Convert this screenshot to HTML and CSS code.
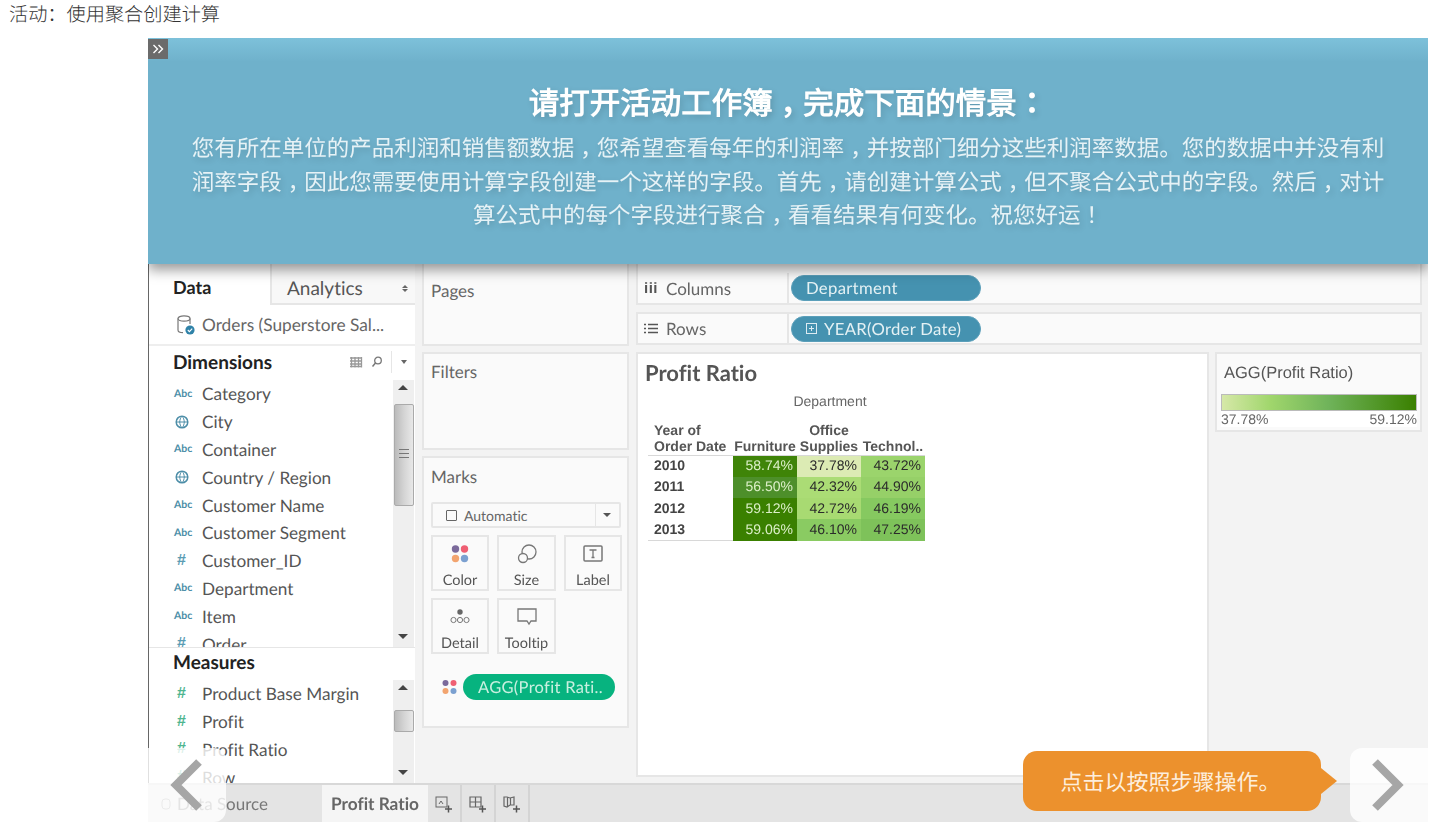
FILE: index.html
```html
<!DOCTYPE html>
<html lang="zh-CN">
<head>
    <meta charset="UTF-8">
    <meta name="viewport" content="width=device-width, initial-scale=1.0">
    <title>活动：使用聚合创建计算</title>
    <link rel="stylesheet" href="styles.css">
</head>
<body>
    <div class="page-title">活动：使用聚合创建计算</div>

    <div class="stage">
        <!-- Tableau workspace picture -->
        <div class="workspace">
            <div class="sidebar">
                <div class="side-tabs">
                    <div class="side-tab active">Data</div>
                    <div class="side-tab">Analytics<span class="updown"></span></div>
                </div>
                <div class="source-row">
                    <svg class="db-icon" width="20" height="22" viewBox="0 0 20 22">
                        <ellipse cx="8" cy="4.5" rx="6" ry="2.6" fill="none" stroke="#777" stroke-width="1.2"/>
                        <path d="M2 4.5V16c0 1.6 2.4 2.6 5 2.6M14 4.5V10" fill="none" stroke="#777" stroke-width="1.2"/>
                        <circle cx="14" cy="16" r="4.6" fill="#2f82a8"/>
                        <path d="M11.8 16l1.6 1.6 2.8-3" fill="none" stroke="#fff" stroke-width="1.1"/>
                    </svg>
                    Orders (Superstore Sal...
                </div>

                <div class="dimensions">
                    <div class="section-head">
                        Dimensions
                        <div class="head-tools">
                            <svg width="14" height="12" viewBox="0 0 14 12"><path d="M1 2h12M1 5h12M1 8h12M1 10.500h12M2.500 1v10.500M6 1v10.500M9.500 1v10.500M12.500 1v10.500" stroke="#999" stroke-width="1.300" fill="none"/></svg>
                            <svg width="12" height="12" viewBox="0 0 12 12"><circle cx="7" cy="4.500" r="3.300" fill="none" stroke="#777" stroke-width="1.300"/><path d="M4.500 7L1.500 10.500" stroke="#777" stroke-width="1.500"/></svg>
                            <span class="head-caret"></span>
                        </div>
                    </div>
                    <div class="field-pane">
                        <ul class="field-list">
                            <li><span class="abc">Abc</span>Category</li>
                            <li>
                                <svg class="globe" width="14" height="14" viewBox="0 0 14 14"><circle cx="7" cy="7" r="5.800" fill="none" stroke="#4d8ea8" stroke-width="1.500"/><path d="M1.200 7h11.600M7 1.200c-3 3-3 8.600 0 11.600M7 1.200c3 3 3 8.600 0 11.600" fill="none" stroke="#4d8ea8"/></svg>City
                            </li>
                            <li><span class="abc">Abc</span>Container</li>
                            <li>
                                <svg class="globe" width="14" height="14" viewBox="0 0 14 14"><circle cx="7" cy="7" r="5.800" fill="none" stroke="#4d8ea8" stroke-width="1.500"/><path d="M1.200 7h11.600M7 1.200c-3 3-3 8.600 0 11.600M7 1.200c3 3 3 8.600 0 11.600" fill="none" stroke="#4d8ea8"/></svg>Country / Region
                            </li>
                            <li><span class="abc">Abc</span>Customer Name</li>
                            <li><span class="abc">Abc</span>Customer Segment</li>
                            <li><span class="hash">#</span>Customer_ID</li>
                            <li><span class="abc">Abc</span>Department</li>
                            <li><span class="abc">Abc</span>Item</li>
                            <li><span class="hash">#</span>Order</li>
                        </ul>
                        <div class="scrollbar">
                            <span class="arrow-up"></span>
                            <div class="thumb thumb-long"><span class="grip"></span></div>
                            <span class="arrow-down"></span>
                        </div>
                    </div>
                </div>

                <div class="measures">
                    <div class="section-head">Measures</div>
                    <div class="field-pane">
                        <ul class="field-list">
                            <li><span class="hash green">#</span>Product Base Margin</li>
                            <li><span class="hash green">#</span>Profit</li>
                            <li><span class="hash green">#</span>Profit Ratio</li>
                            <li><span class="hash green">#</span>Row</li>
                        </ul>
                        <div class="scrollbar">
                            <span class="arrow-up"></span>
                            <div class="thumb thumb-short"></div>
                            <span class="arrow-down"></span>
                        </div>
                    </div>
                </div>
            </div>

            <div class="cards">
                <div class="card card-pages">Pages</div>
                <div class="card card-filters">Filters</div>
                <div class="card card-marks">
                    Marks
                    <div class="mark-select">
                        <span class="mark-square"></span>
                        <span class="mark-select-text">Automatic</span>
                        <span class="mark-select-btn"></span>
                    </div>
                    <div class="mark-grid">
                        <div class="mark-btn">
                            <svg width="20" height="20" viewBox="0 0 20 20"><circle cx="5.500" cy="5" r="3.700" fill="#7b6a9b"/><circle cx="14.500" cy="5" r="3.700" fill="#ef5f73"/><circle cx="5.500" cy="14.500" r="3.700" fill="#f2a46f"/><circle cx="14.500" cy="14.500" r="3.700" fill="#7ba0d0"/></svg>
                            Color
                        </div>
                        <div class="mark-btn">
                            <svg width="20" height="20" viewBox="0 0 20 20"><circle cx="12" cy="8" r="7" fill="none" stroke="#777" stroke-width="1.300"/><circle cx="6" cy="14" r="4.500" fill="#fafafa" stroke="#777" stroke-width="1.300"/></svg>
                            Size
                        </div>
                        <div class="mark-btn">
                            <svg width="20" height="20" viewBox="0 0 20 20"><rect x="1" y="2" width="18" height="15" rx="1" fill="none" stroke="#777" stroke-width="1.500"/><path d="M6.500 6h7M10 6v7.500M8.500 13.500h3" stroke="#777" stroke-width="1.300" fill="none"/></svg>
                            Label
                        </div>
                        <div class="mark-btn">
                            <svg width="22" height="20" viewBox="0 0 22 20"><circle cx="11" cy="5" r="2.700" fill="#666"/><circle cx="4.500" cy="13" r="2.600" fill="none" stroke="#777"/><circle cx="11" cy="13" r="2.600" fill="none" stroke="#777"/><circle cx="17.500" cy="13" r="2.600" fill="none" stroke="#777"/></svg>
                            Detail
                        </div>
                        <div class="mark-btn">
                            <svg width="20" height="20" viewBox="0 0 20 20"><path d="M1 2h18v12h-5l-2 3-2-3H1z" fill="none" stroke="#777" stroke-width="1.300"/></svg>
                            Tooltip
                        </div>
                    </div>
                    <div class="mark-field">
                        <svg width="15" height="16" viewBox="0 0 15 16"><circle cx="3.500" cy="4" r="3" fill="#7b6a9b"/><circle cx="11.500" cy="4" r="3" fill="#ef5f73"/><circle cx="3.500" cy="12" r="3" fill="#f2a46f"/><circle cx="11.500" cy="12" r="3" fill="#7ba0d0"/></svg>
                        <span class="pill pill-green">AGG(Profit Rati..</span>
                    </div>
                </div>
            </div>

            <div class="main-area">
                <div class="shelf shelf-columns">
                    <div class="shelf-label"><span class="shelf-icon">iii</span>Columns</div>
                    <span class="pill pill-blue">Department</span>
                </div>
                <div class="shelf shelf-rows">
                    <div class="shelf-label">
                        <svg class="shelf-svg" width="14" height="11" viewBox="0 0 14 11"><path d="M0 1.500h2M4 1.500h10M0 5.500h2M4 5.500h10M0 9.500h2M4 9.500h10" stroke="#555" stroke-width="1.500"/></svg>
                        Rows
                    </div>
                    <span class="pill pill-blue">
                        <svg class="plus-box" width="11" height="11" viewBox="0 0 11 11"><rect x=".5" y=".5" width="10" height="10" fill="none" stroke="#dcebf2"/><path d="M3 5.500h5M5.500 3v5" stroke="#dcebf2"/></svg>
                        YEAR(Order Date)
                    </span>
                </div>
                <div class="view-row">
                    <div class="view">
                        <div class="view-title">Profit Ratio</div>
                        <div class="dept-label">Department</div>
                        <table class="crosstab">
                            <tr class="head-row">
                                <th class="year-head">Year of<br>Order Date</th>
                                <th>Furniture</th>
                                <th>Office<br>Supplies</th>
                                <th>Technol..</th>
                            </tr>
                            <tr>
                                <th class="year">2010</th>
                                <td class="light-text" style="background: #3f8408">58.74%</td>
                                <td style="background: #dcebb4">37.78%</td>
                                <td style="background: #9bd46c">43.72%</td>
                            </tr>
                            <tr>
                                <th class="year">2011</th>
                                <td class="light-text" style="background: #4d8f2a">56.50%</td>
                                <td style="background: #abdc75">42.32%</td>
                                <td style="background: #96d068">44.90%</td>
                            </tr>
                            <tr>
                                <th class="year">2012</th>
                                <td class="light-text" style="background: #3a8000">59.12%</td>
                                <td style="background: #a8da72">42.72%</td>
                                <td style="background: #86c960">46.19%</td>
                            </tr>
                            <tr>
                                <th class="year">2013</th>
                                <td class="light-text" style="background: #3a8000">59.06%</td>
                                <td style="background: #8acb62">46.10%</td>
                                <td style="background: #7ec25a">47.25%</td>
                            </tr>
                        </table>
                    </div>
                    <div class="legend-col">
                        <div class="legend">
                            <div class="legend-title">AGG(Profit Ratio)</div>
                            <div class="legend-bar"></div>
                            <div class="legend-range"><span>37.78%</span><span>59.12%</span></div>
                        </div>
                    </div>
                </div>
            </div>
        </div>

        <div class="tabbar">
            <div class="tab-source">
                <svg width="10" height="12" viewBox="0 0 10 12"><rect x="1" y="1" width="8" height="10" rx="3" fill="none" stroke="#999"/></svg>
                Data Source
            </div>
            <div class="tab-sheet">Profit Ratio</div>
            <div class="tab-add">
                <svg width="18" height="18" viewBox="0 0 18 18"><rect x="1" y="2" width="11" height="10" fill="none" stroke="#666"/><path d="M4 9l2-3 2 3" stroke="#666" fill="none"/><path d="M10 14h7M13.500 10.500v7" stroke="#555" stroke-width="1.500" fill="none"/></svg>
            </div>
            <div class="tab-add">
                <svg width="18" height="18" viewBox="0 0 18 18"><path d="M1 2h11v10H1zM1 7h11M6.500 2v10" stroke="#666" stroke-width="1.200" fill="none"/><path d="M10 14h7M13.500 10.500v7" stroke="#555" stroke-width="1.500" fill="none"/></svg>
            </div>
            <div class="tab-add">
                <svg width="18" height="18" viewBox="0 0 18 18"><path d="M1 2h3l3 1 4-1v8H7l-3 2-3-1zM4.500 2.500v9M7.500 3v7" stroke="#666" stroke-width="1.200" fill="none"/><path d="M10 14h7M13.500 10.500v7" stroke="#555" stroke-width="1.500" fill="none"/></svg>
            </div>
        </div>

        <!-- Overlays on top of the picture -->
        <div class="banner">
            <button class="collapse-btn">
                <svg width="12" height="10" viewBox="0 0 12 10"><path d="M1.500 1l4 4-4 4M6.500 1l4 4-4 4" fill="none" stroke="#fff" stroke-width="1.400"/></svg>
            </button>
            <h2 class="banner-title">请打开活动工作簿<span class="tc comma" lang="zh-TW">，</span>完成下面的情景<span class="tc" lang="zh-TW">：</span></h2>
            <p class="banner-text">您有所在单位的产品利润和销售额数据<span class="tc comma" lang="zh-TW">，</span>您希望查看每年的利润率<span class="tc comma" lang="zh-TW">，</span>并按部门细分这些利润率数据。您的数据中并没有利润率字段<span class="tc comma" lang="zh-TW">，</span>因此您需要使用计算字段创建一个这样的字段。首先<span class="tc comma" lang="zh-TW">，</span>请创建计算公式<span class="tc comma" lang="zh-TW">，</span>但不聚合公式中的字段。然后<span class="tc comma" lang="zh-TW">，</span>对计算公式中的每个字段进行聚合<span class="tc comma" lang="zh-TW">，</span>看看结果有何变化。祝您好运<span class="tc" lang="zh-TW">！</span></p>
        </div>

        <button class="nav-btn nav-prev">
            <svg width="34" height="52" viewBox="0 0 34 52"><path d="M29 3L6 26l23 23" fill="none" stroke="#a6a6a6" stroke-width="8"/></svg>
        </button>
        <button class="nav-btn nav-next">
            <svg width="34" height="52" viewBox="0 0 34 52"><path d="M5 3l23 23L5 49" fill="none" stroke="#a6a6a6" stroke-width="8"/></svg>
        </button>
        <div class="callout">点击以按照步骤操作。</div>
    </div>
</body>
</html>
```

FILE: styles.css
```css
* {
    box-sizing: border-box;
}

body {
    margin: 0;
    background: #fff;
    font-family: "Noto Sans CJK SC", sans-serif;
    text-rendering: geometricPrecision;
    text-spacing-trim: space-all;
}

.page-title {
    height: 38px;
    padding-left: 9px;
    font-size: 19.2px;
    font-weight: 300;
    line-height: 26px;
    color: #333;
}

.stage {
    position: relative;
    display: flex;
    flex-direction: column;
    width: 1280px;
    height: 784px;
    margin-left: 148px;
    padding-top: 226px;
    overflow: hidden;
    background: #f3f3f3;
    font-family: Lato, sans-serif;
    font-variant-ligatures: none;
    color: #555;
}

/* workspace */
.workspace {
    flex: 1;
    display: flex;
    min-height: 0;
    filter: blur(0.35px);
}

.sidebar {
    display: flex;
    flex-direction: column;
    width: 267px;
    flex: none;
    background: #fff;
    border-left: 1px solid #666;
}

.side-tabs {
    display: flex;
    height: 41px;
    flex: none;
}

.side-tab {
    position: relative;
    padding: 13px 0 0 15px;
    flex: 1;
    font-size: 19px;
    color: #555;
    background: #f8f8f8;
    border-left: 2px solid #e6e6e6;
    border-bottom: 2px solid #e6e6e6;
}

.side-tab.active {
    flex: none;
    width: 121px;
    padding: 12px 0 0 24px;
    font-size: 18px;
    font-weight: 700;
    color: #222;
    background: #fff;
    border: 0;
}

.updown {
    position: absolute;
    right: 7px;
    top: 18px;
    width: 0;
    height: 0;
    border: 3px solid transparent;
    border-bottom-color: #666;
}

.updown::after {
    content: "";
    position: absolute;
    left: -3px;
    top: 4px;
    border: 3px solid transparent;
    border-top-color: #666;
}

.source-row {
    display: flex;
    align-items: center;
    gap: 6px;
    height: 41px;
    flex: none;
    padding-left: 27px;
    font-size: 17.300px;
    color: #666;
    border-bottom: 2px solid #eee;
}

.dimensions {
    height: 301px;
    flex: none;
    display: flex;
    flex-direction: column;
    overflow: hidden;
}

.measures {
    flex: 1;
    min-height: 0;
    display: flex;
    flex-direction: column;
    border-top: 1px solid #e6e6e6;
}

.section-head {
    display: flex;
    align-items: center;
    justify-content: space-between;
    height: 34px;
    flex: none;
    padding: 0 5px 2px 24px;
    font-size: 19px;
    font-weight: 700;
    color: #222;
}

.measures .section-head {
    height: 32px;
    padding-bottom: 3px;
}

.head-tools {
    display: flex;
    align-items: center;
    gap: 8px;
}

.head-caret {
    position: relative;
    width: 19px;
    height: 22px;
    border-left: 1px solid #e6e6e6;
}

.head-caret::after {
    content: "";
    position: absolute;
    left: 9px;
    top: 9px;
    border: 3.500px solid transparent;
    border-top: 4px solid #666;
}

.field-pane {
    flex: 1;
    min-height: 0;
    display: flex;
    overflow: hidden;
}

.field-list {
    flex: 1;
    margin: 0;
    padding: 0;
    list-style: none;
}

.field-list li {
    display: flex;
    align-items: center;
    height: 27.800px;
    font-size: 17.200px;
    color: #555;
}

.abc {
    width: 53px;
    padding-left: 25px;
    font-size: 10.500px;
    font-weight: 700;
    color: #4d8ea8;
}

.hash {
    width: 53px;
    padding-left: 28px;
    font-family: "Liberation Sans", sans-serif;
    font-size: 16px;
    font-weight: 700;
    color: #5b9cb3;
}

.hash.green {
    color: #4fb58f;
}

.globe {
    margin: 0 13px 0 26px;
    flex: none;
}

.scrollbar {
    position: relative;
    width: 21px;
    flex: none;
    margin-right: 1px;
    background: #efefef;
}

.arrow-up,
.arrow-down {
    position: absolute;
    left: 5px;
    border: 5px solid transparent;
}

.arrow-up {
    top: 5px;
    border-top: 0;
    border-bottom: 5px solid #444;
}

.arrow-down {
    bottom: 8px;
    border-bottom: 0;
    border-top: 5px solid #444;
}

.thumb {
    position: absolute;
    left: 1px;
    right: 0;
    border: 1px solid #aaa;
    border-radius: 2px;
    background: linear-gradient(to right, #bbb, #d4d4d4 50%, #e8e8e8);
}

.thumb-long {
    top: 24px;
    height: 102px;
}

.thumb-short {
    top: 30px;
    height: 22px;
}

.grip {
    position: absolute;
    left: 4px;
    right: 4px;
    top: 44px;
    height: 9px;
    border-top: 1px solid #777;
    border-bottom: 1px solid #777;
}

.grip::after {
    content: "";
    position: absolute;
    left: 0;
    right: 0;
    top: 3px;
    border-top: 1px solid #777;
}

/* pages, filters, marks */
.cards {
    width: 221px;
    flex: none;
    display: flex;
    flex-direction: column;
    gap: 6px;
    padding: 0 7px;
}

.card {
    padding: 16px 6px 0 7px;
    font-size: 17px;
    color: #666;
    background: #fafafa;
    border: 2px solid #e6e6e6;
    border-top: 0;
}

.card-pages {
    height: 82px;
    padding-top: 16px;
}

.card-filters {
    height: 98px;
    border-top: 2px solid #e6e6e6;
    padding-top: 7px;
}

.card-marks {
    height: 272px;
    border-top: 2px solid #e6e6e6;
    padding-top: 8px;
}

.mark-select {
    display: flex;
    align-items: center;
    height: 26px;
    margin-top: 15px;
    font-size: 14px;
    border: 2px solid #e6e6e6;
    border-radius: 2px;
}

.mark-square {
    width: 11px;
    height: 11px;
    margin: 0 7px 0 13px;
    border: 1px solid #666;
    border-radius: 1px;
}

.mark-select-text {
    flex: 1;
}

.mark-select-btn {
    position: relative;
    width: 24px;
    height: 100%;
    border-left: 1px solid #e6e6e6;
}

.mark-select-btn::after {
    content: "";
    position: absolute;
    left: 7px;
    top: 9px;
    border: 4px solid transparent;
    border-top: 4px solid #555;
}

.mark-grid {
    display: grid;
    grid-template-columns: 58px 59px 58px;
    grid-auto-rows: 56px;
    column-gap: 8px;
    row-gap: 7px;
    margin-top: 7px;
}

.mark-btn {
    display: flex;
    flex-direction: column;
    align-items: center;
    justify-content: flex-end;
    gap: 8px;
    font-size: 14.500px;
    color: #555;
    border: 2px solid #e6e6e6;
}

.mark-field {
    display: flex;
    align-items: center;
    gap: 6px;
    margin: 20px 0 0 11px;
}

.pill {
    display: flex;
    align-items: center;
    height: 26px;
    border-radius: 13px;
    font-size: 16.700px;
    color: #e4f1f4;
    letter-spacing: 0.300px;
}

.pill-green {
    width: 152px;
    padding-left: 15px;
    font-size: 16.500px;
    background: #07b37f;
    color: #c9f0e0;
}

.pill-blue {
    width: 190px;
    padding-left: 14px;
    background: #4592b0;
    border: 1px solid #5b9fba;
}

/* shelves and the view */
.main-area {
    flex: 1;
    min-width: 0;
    display: flex;
    flex-direction: column;
    padding-right: 6px;
}

.shelf {
    display: flex;
    align-items: center;
    background: #fafafa;
    border: 2px solid #e6e6e6;
    border-top: 0;
}

.shelf-columns {
    height: 41px;
    padding-top: 9px;
    margin-bottom: 7px;
}

.shelf-rows {
    height: 33px;
    border-top: 2px solid #e6e6e6;
}

.shelf-label {
    display: flex;
    align-items: center;
    gap: 8px;
    width: 151px;
    height: 100%;
    margin-right: 2px;
    padding-left: 6px;
    font-size: 17px;
    color: #666;
    border-right: 2px solid #e6e6e6;
}

.shelf-icon {
    font-family: "Liberation Sans", sans-serif;
    font-size: 15px;
    font-weight: 700;
    color: #555;
    letter-spacing: 0.500px;
}

.shelf-svg {
    flex: none;
}

.plus-box {
    margin-right: 7px;
}

.view-row {
    flex: 1;
    min-height: 0;
    display: flex;
    gap: 6px;
    margin: 7px 0 6px;
}

.view {
    width: 573px;
    flex: none;
    padding: 5px 0 0 7px;
    background: #fff;
    border: 2px solid #e6e6e6;
}

.view-title {
    font-size: 22px;
    font-weight: 700;
    color: #555;
}

.dept-label {
    width: 370px;
    margin-top: 7px;
    text-align: center;
    font-family: "Liberation Sans", sans-serif;
    font-size: 14px;
    color: #666;
}

.crosstab {
    margin: 13px 0 0 3px;
    border-collapse: collapse;
    font-family: "Liberation Sans", sans-serif;
    font-size: 14px;
}

.crosstab th {
    padding: 0;
    font-weight: 700;
    line-height: 16px;
    color: #555;
    text-align: center;
    vertical-align: bottom;
}

.crosstab .year-head,
.crosstab .year {
    width: 85px;
    padding-left: 6px;
    text-align: left;
}

.head-row th {
    padding-bottom: 1px;
    border-bottom: 1px solid #d8d8d8;
}

.crosstab .year {
    padding-bottom: 2px;
    vertical-align: middle;
    color: #444;
}

.crosstab tr:last-child .year {
    border-bottom: 1px solid #d8d8d8;
}

.crosstab td {
    width: 64px;
    height: 21.300px;
    padding: 0 4px 2px 0;
    text-align: right;
    color: #2b2b2b;
}

.crosstab td.light-text {
    color: #dcefc8;
}

.legend-col {
    flex: 1;
}

.legend {
    height: 80px;
    padding: 10px 3px 0 4px;
    font-family: "Liberation Sans", sans-serif;
    background: #fafafa;
    border: 2px solid #e6e6e6;
}

.legend-title {
    padding-left: 3px;
    font-size: 16.500px;
    color: #555;
}

.legend-bar {
    height: 17px;
    margin-top: 11px;
    background: linear-gradient(to right, #d6e8a8, #a0d66c 25%, #6fb35a 55%, #3a8000);
    border: 1px solid #bbb;
}

.legend-range {
    display: flex;
    justify-content: space-between;
    font-size: 14px;
    line-height: 16px;
    color: #666;
    background: #fff;
}

/* bottom tabs */
.tabbar {
    display: flex;
    align-items: stretch;
    height: 39px;
    flex: none;
    font-size: 17px;
    background: #e4e4e4;
    border-top: 2px solid #d8d8d8;
    filter: blur(0.35px);
}

.tab-source {
    display: flex;
    align-items: center;
    gap: 6px;
    width: 174px;
    padding-left: 13px;
    color: #777;
}

.tab-sheet {
    display: flex;
    align-items: center;
    justify-content: center;
    width: 106px;
    font-size: 17.300px;
    font-weight: 700;
    color: #666;
    background: #f5f5f5;
}

.tab-add {
    display: flex;
    align-items: center;
    justify-content: center;
    width: 34px;
    border-right: 2px solid #d4d4d4;
}

/* overlays */
.banner {
    position: absolute;
    top: 0;
    left: 0;
    right: 0;
    height: 226px;
    padding: 40px 0 0;
    text-align: center;
    color: #fff;
    background: linear-gradient(to bottom, #7dc1da, #6fb1cb 24px);
    box-shadow: 0 6px 12px rgba(0, 0, 0, 0.4);
}

.collapse-btn {
    position: absolute;
    top: 1px;
    left: 0;
    display: flex;
    align-items: center;
    justify-content: center;
    width: 20px;
    height: 20px;
    padding: 0;
    background: #6b6b6b;
    border: 0;
}

.banner-title {
    margin: 0;
    font-size: 30.500px;
    font-weight: 700;
    line-height: 46px;
    text-shadow: 2px 3px 6px rgba(0, 0, 0, 0.15);
}

.banner-text {
    width: 1200px;
    margin: 0 auto;
    padding-top: 5px;
    font-size: 22.500px;
    line-height: 33.500px;
    color: #e6f2f6;
    text-shadow: 2px 3px 6px rgba(0, 0, 0, 0.15);
}

.tc {
    font-family: "Noto Sans CJK TC", sans-serif;
}

/* comma sits centred in its cell but low on the line */
.comma {
    line-height: 0;
    vertical-align: -0.3em;
}

.nav-btn {
    position: absolute;
    bottom: 0;
    display: flex;
    align-items: center;
    justify-content: center;
    width: 78px;
    height: 74px;
    padding: 0;
    background: rgba(255, 255, 255, 0.8);
    border: 0;
}

.nav-prev {
    left: 0;
    border-radius: 0 12px 12px 0;
}

.nav-next {
    right: 0;
    padding-right: 4px;
    border-radius: 12px 0 0 12px;
}

.callout {
    position: absolute;
    left: 875px;
    bottom: 11px;
    display: flex;
    align-items: center;
    justify-content: center;
    width: 298px;
    height: 60px;
    padding-right: 3px;
    font-size: 22px;
    color: #fdeedd;
    background: #ec912d;
    border-radius: 14px;
}

.callout::after {
    content: "";
    position: absolute;
    left: 100%;
    top: 50%;
    margin-top: -13px;
    border-left: 16px solid #ec912d;
    border-top: 13px solid transparent;
    border-bottom: 13px solid transparent;
}
```
